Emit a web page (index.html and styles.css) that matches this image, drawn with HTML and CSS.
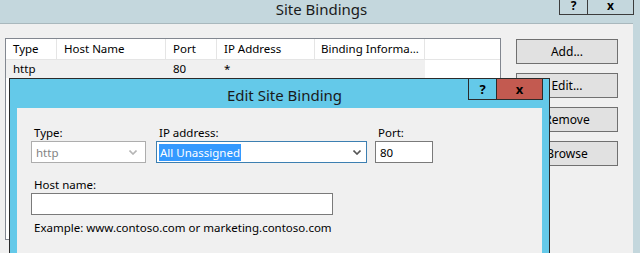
FILE: index.html
```html
<!DOCTYPE html>
<html lang="en">
<head>
<meta charset="UTF-8">
<meta name="viewport" content="width=device-width, initial-scale=1.0">
<title>Site Bindings</title>
<link rel="stylesheet" href="styles.css">
</head>
<body>

<div class="janela">
  <div class="barra">
    <span class="titulo">Site Bindings</span>
    <div class="botoesBarra">
      <span class="btnAjuda">?</span>
      <span class="btnFechar">x</span>
    </div>
  </div>

  <div class="conteudo">
    <div class="lista">
      <div class="cabecalho">
        <span class="col colTipo">Type</span>
        <span class="col colHost">Host Name</span>
        <span class="col colPorta">Port</span>
        <span class="col colIp">IP Address</span>
        <span class="col colInfo">Binding Informa...</span>
      </div>
      <div class="linha">
        <span class="col colTipo">http</span>
        <span class="col colHost"></span>
        <span class="col colPorta">80</span>
        <span class="col colIp">*</span>
        <span class="col colInfo"></span>
      </div>
    </div>

    <div class="acoes">
      <button class="btnAcao">Add...</button>
      <button class="btnAcao">Edit...</button>
      <button class="btnAcao">Remove</button>
      <button class="btnAcao">Browse</button>
    </div>
  </div>
</div>

<div class="dialogo">
  <div class="barraDialogo">
    <span class="tituloDialogo">Edit Site Binding</span>
    <div class="botoesDialogo">
      <span class="btnAjudaD">?</span>
      <span class="btnFecharD">x</span>
    </div>
  </div>
  <div class="corpo">
    <div class="campos">
      <div class="campo campoTipo">
        <label>Type:</label>
        <div class="combo desativado">
          <span>http</span>
          <svg class="seta" width="8" height="5" viewBox="0 0 8 5"><polyline points="0.5,0.5 4,4 7.5,0.5" fill="none" stroke-width="1.6"/></svg>
        </div>
      </div>
      <div class="campo campoIp">
        <label>IP address:</label>
        <div class="combo focado">
          <span class="selecao">All Unassigned</span>
          <svg class="seta" width="8" height="5" viewBox="0 0 8 5"><polyline points="0.5,0.5 4,4 7.5,0.5" fill="none" stroke-width="1.6"/></svg>
        </div>
      </div>
      <div class="campo campoPorta">
        <label>Port:</label>
        <div class="caixa">80</div>
      </div>
    </div>
    <div class="campo campoHost">
      <label>Host name:</label>
      <div class="caixa caixaHost"></div>
    </div>
    <p class="exemplo">Example: www.contoso.com or marketing.contoso.com</p>
  </div>
</div>

</body>
</html>
```

FILE: styles.css
```css
body {
  margin: 0;
  width: 640px;
  height: 253px;
  overflow: hidden;
  font-family: "Noto Sans", sans-serif;
  font-size: 11.5px;
  color: #000;
  background-color: #c4d7dd;
}

/* janela de fundo */
.janela {
  width: 633px;
  height: 253px;
  display: flex;
  flex-direction: column;
}

.barra {
  height: 23px;
  display: flex;
  justify-content: center;
  position: relative;
  border-bottom: 1px solid #a9b8bd;
}

.titulo {
  font-size: 15px;
  line-height: 18px;
  color: #1a1a1a;
  margin-left: 10px;
}

.botoesBarra {
  position: absolute;
  top: 0;
  right: -1px;
  display: flex;
}

.btnAjuda, .btnFechar {
  height: 14px;
  border: 1px solid #3c3c3c;
  border-top: none;
  font-weight: bold;
  font-size: 12px;
  line-height: 12px;
  text-align: center;
}

.btnAjuda {
  width: 27px;
  border-right: none;
}

.btnFechar {
  width: 45px;
}

.conteudo {
  flex: 1;
  background-color: #f0f0f0;
  display: flex;
  padding: 14px 0 0 5px;
}

.lista {
  width: 494px;
  height: 200px;
  border: 1px solid #828790;
  background-color: #fff;
}

.cabecalho, .linha {
  display: flex;
}

.cabecalho {
  height: 20px;
  border-bottom: 1px solid #e5e5e5;
}

.cabecalho .col {
  border-right: 1px solid #e5e5e5;
  line-height: 20px;
}

.linha {
  height: 18px;
  line-height: 18px;
}

.linha .col {
  background-color: #f0f0f0;
}

.linha .colInfo {
  background-color: #fff;
}

.col {
  box-sizing: border-box;
  padding-left: 7px;
  white-space: nowrap;
  overflow: hidden;
}

.colTipo { width: 51px; }
.colHost { width: 109px; }
.colPorta { width: 51px; }
.colIp { width: 208px; }
.cabecalho .colIp { width: 98px; }
.cabecalho .colInfo { width: 110px; padding-left: 6px; }
.linha .colInfo { flex: 1; }

.acoes {
  margin-left: 15px;
  display: flex;
  flex-direction: column;
  gap: 9px;
  margin-top: 1px;
}

.btnAcao {
  width: 102px;
  height: 25px;
  background-color: #e1e1e1;
  border: 1px solid #707070;
  font-family: "Noto Sans", sans-serif;
  font-size: 12px;
  color: #000;
  padding: 0;
}

/* dialogo sobreposto */
.dialogo {
  position: absolute;
  left: 9px;
  top: 78px;
  width: 539px;
  height: 174px;
  border: 1px solid #2b2b2b;
  border-bottom: none;
  background-color: #64c9e9;
}

.barraDialogo {
  height: 29px;
  display: flex;
  justify-content: center;
  position: relative;
}

.tituloDialogo {
  font-size: 15px;
  line-height: 32px;
  color: #1a1a1a;
  margin-left: 10px;
}

.botoesDialogo {
  position: absolute;
  top: -1px;
  right: 6px;
  display: flex;
}

.btnAjudaD, .btnFecharD {
  height: 20px;
  border: 1px solid #2b2b2b;
  font-weight: bold;
  font-size: 13px;
  line-height: 20px;
  text-align: center;
}

.btnAjudaD {
  width: 27px;
  border-right: none;
}

.btnFecharD {
  width: 45px;
  background-color: #c35a50;
}

.corpo {
  margin-left: 7px;
  margin-right: 7px;
  height: 145px;
  background-color: #f0f0f0;
  padding: 17px 0 0 14px;
  box-sizing: border-box;
}

.campos {
  display: flex;
}

.campo label {
  display: block;
  margin-left: 3px;
  line-height: 15px;
  margin-bottom: 1px;
}

.campoTipo { width: 125px; }
.campoIp { width: 219px; }

.combo, .caixa {
  box-sizing: border-box;
  height: 22px;
  background-color: #fff;
  display: flex;
  align-items: center;
  padding: 0 4px;
  justify-content: space-between;
}

.combo.desativado {
  width: 115px;
  border: 1px solid #adadad;
  color: #838383;
  padding-right: 8px;
}

.combo.focado {
  width: 211px;
  border: 1px solid #3c7fb1;
  padding-left: 2px;
  padding-right: 5px;
}

.selecao {
  background-color: #3399ff;
  color: #fff;
  line-height: 17px;
  padding: 0 1px;
}

.seta {
  stroke: #555;
}

.desativado .seta {
  stroke: #b5b5b5;
}

.caixa {
  width: 58px;
  border: 1px solid #7a7a7a;
}

.campoHost {
  margin-top: 14px;
}

.caixaHost {
  width: 302px;
}

.exemplo {
  margin: 5px 0 0 3px;
}
```
